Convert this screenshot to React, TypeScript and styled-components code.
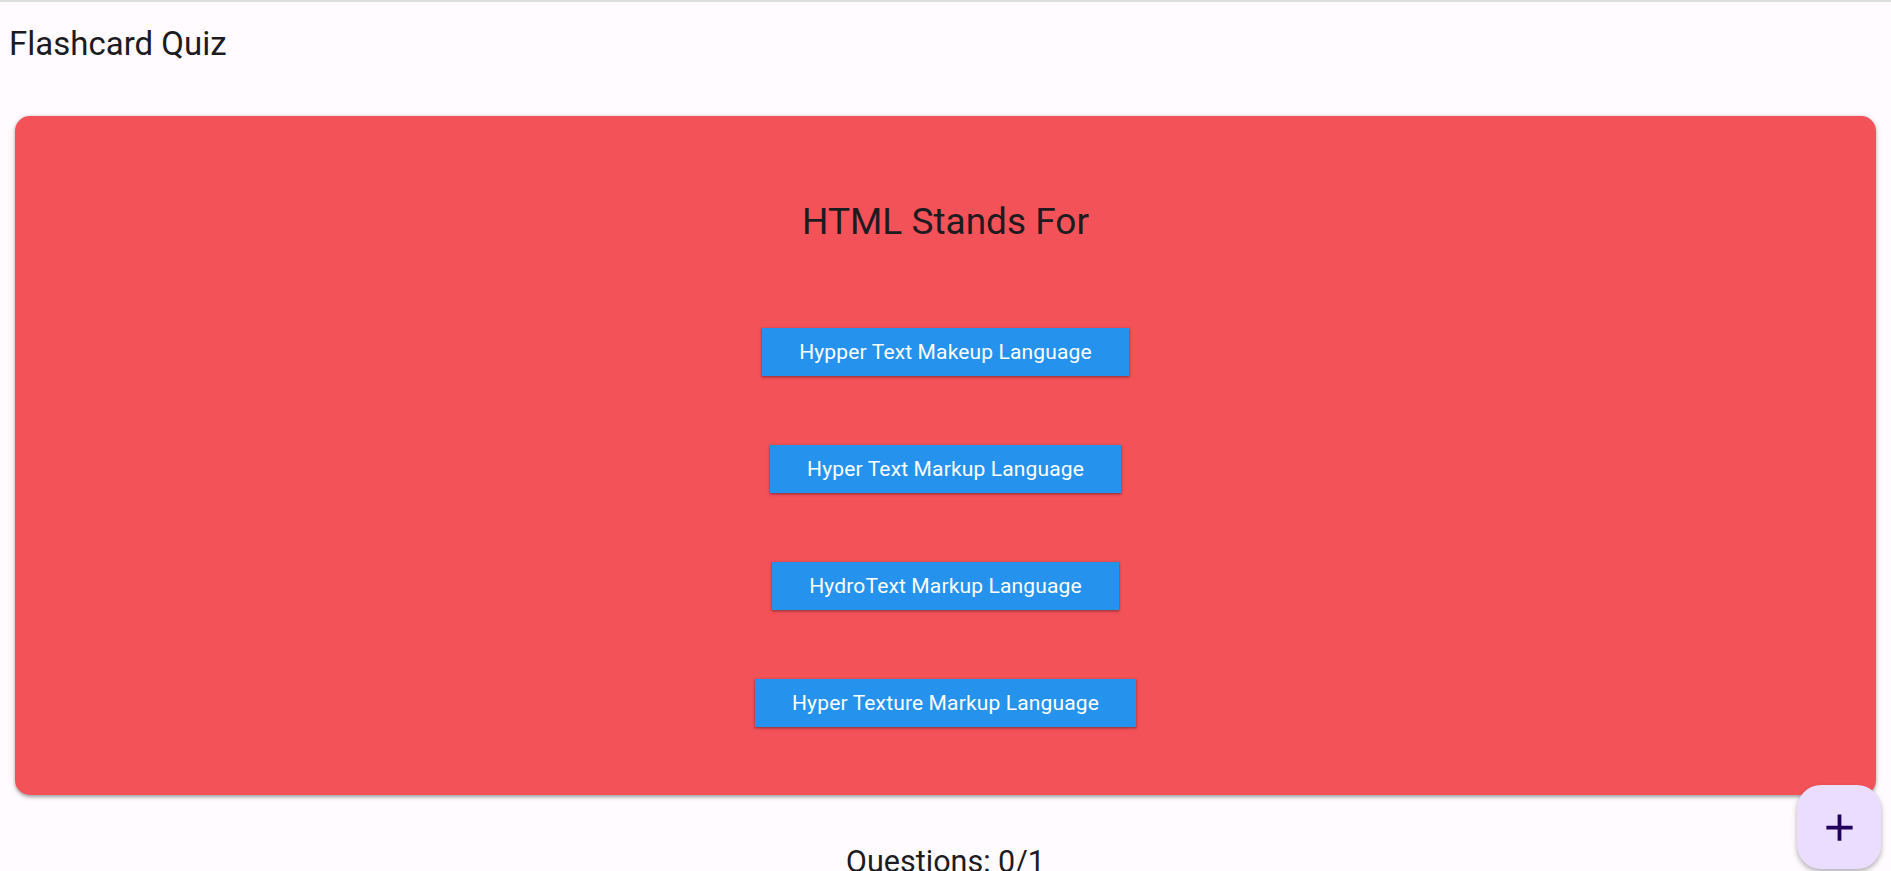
import React from "react";
import styled, { createGlobalStyle } from "styled-components";

const GlobalStyle = createGlobalStyle`
  html, body {
    margin: 0;
    padding: 0;
    overflow: hidden;
    background: #fffbfe;
    font-family: Roboto, "Noto Sans", "Liberation Sans", sans-serif;
    color: #1c1b1f;
  }
  * { box-sizing: border-box; }
`;

const Page = styled.div`
  width: 1891px;
  border-top: 2px solid #dcdfdc;
  display: flex;
  flex-direction: column;
`;

const AppBar = styled.header`
  height: 114px;
  flex-shrink: 0;
  padding: 22px 0 0 9px;
`;

const Title = styled.h1`
  margin: 0;
  font-size: 33px;
  line-height: 40px;
  font-weight: 400;
  color: #1c1b1f;
`;

const Card = styled.section`
  margin: 0 15px;
  height: 679px;
  flex-shrink: 0;
  background: #f35259;
  border-radius: 15px;
  box-shadow: 0 1.5px 3px rgba(0, 0, 0, 0.25), 0 1.5px 5px 1px rgba(0, 0, 0, 0.12);
  padding: 84px 0 68px;
  display: flex;
  flex-direction: column;
  align-items: center;
`;

const Question = styled.h2`
  margin: 0;
  font-size: 37px;
  line-height: 44px;
  font-weight: 400;
  color: #1c1b1f;
`;

const Options = styled.div`
  margin-top: 84px;
  display: flex;
  flex-direction: column;
  align-items: center;
  gap: 69px;
`;

const OptionButton = styled.button`
  height: 48px;
  padding: 0 37px;
  border: none;
  border-radius: 0;
  background: #2593ed;
  color: #ffffff;
  font-family: Roboto, "Noto Sans", sans-serif;
  font-size: 21px;
  font-weight: 400;
  letter-spacing: 0.15px;
  display: flex;
  align-items: center;
  justify-content: center;
  box-shadow: 0 1px 2px rgba(0, 0, 0, 0.3), 0 1px 3px 1px rgba(0, 0, 0, 0.12);
  cursor: pointer;
`;

const Footer = styled.div`
  margin-top: 47px;
  flex-shrink: 0;
  text-align: center;
  font-size: 30.5px;
  line-height: 40px;
  color: #1c1b1f;
`;

const Fab = styled.button`
  position: fixed;
  left: 1797px;
  top: 785px;
  width: 84px;
  height: 84px;
  border: none;
  border-radius: 24px;
  background: #eaddff;
  color: #21005d;
  display: flex;
  align-items: center;
  justify-content: center;
  padding: 0;
  box-shadow: 0 3px 6px rgba(0, 0, 0, 0.2), 0 2px 4px rgba(0, 0, 0, 0.14);
  cursor: pointer;
`;

const options = [
  "Hypper Text Makeup Language",
  "Hyper Text Markup Language",
  "HydroText Markup Language",
  "Hyper Texture Markup Language",
];

export default function App() {
  return (
    <>
      <GlobalStyle />
      <Page>
        <AppBar>
          <Title>Flashcard Quiz</Title>
        </AppBar>
        <Card>
          <Question>HTML Stands For</Question>
          <Options>
            {options.map((o) => (
              <OptionButton key={o}>{o}</OptionButton>
            ))}
          </Options>
        </Card>
        <Footer>Questions: 0/1</Footer>
      </Page>
      <Fab aria-label="add">
        <svg width="45" height="45" viewBox="0 0 24 24" fill="currentColor">
          <path d="M19 13h-6v6h-2v-6H5v-2h6V5h2v6h6v2z" />
        </svg>
      </Fab>
    </>
  );
}
